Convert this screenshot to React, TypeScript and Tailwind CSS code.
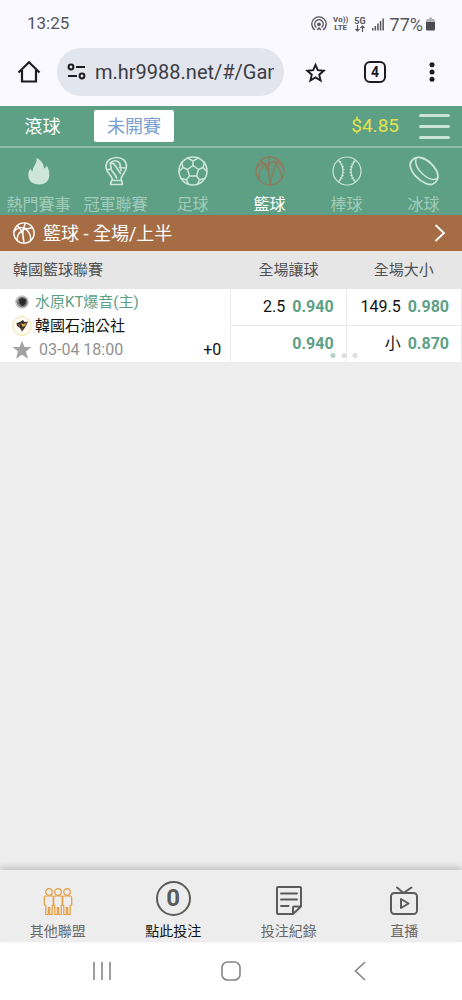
import { useState } from "react";
import type { ReactNode } from "react";

function PhoneStatus() {
  return (
    <div className="flex h-12 items-center justify-between pr-[27px] pl-[27px] text-[17px] text-[#55555c]">
      <time>13:25</time>
      <div className="flex items-center gap-1.5">
        <svg width="16" height="16" viewBox="0 0 16 16" fill="none" stroke="currentColor" strokeWidth="1.4" strokeLinecap="round" aria-hidden="true">
          <path d="M3.4 13.6A7.2 7.2 0 1 1 12.6 13.6" />
          <path d="M5 10.9A4.2 4.2 0 1 1 11 10.9" />
          <circle cx="8" cy="8.3" r="1.2" fill="currentColor" />
          <path d="M6.500 13.600L8 12L9.500 13.600" />
        </svg>
        <span className="flex flex-col items-center text-[8px] leading-[8px] font-bold">
          <span>Vo))</span>
          <span>LTE</span>
        </span>
        <span className="flex flex-col items-center text-[9px] leading-[8px] font-bold">
          <span>5G</span>
          <svg width="10" height="7" viewBox="0 0 10 7" fill="none" stroke="currentColor" strokeWidth="1.2" aria-hidden="true">
            <path d="M2.500 0V6M0.500 4L2.500 6L4.500 4M7.500 7V1M5.500 3L7.500 1L9.500 3" />
          </svg>
        </span>
        <svg width="12" height="13" viewBox="0 0 12 13" fill="currentColor" aria-hidden="true">
          <path d="M0 10h1.500v2.500H0zM2.600 8h1.500v4.500H2.600zM5.200 5.500h1.500v7H5.200zM7.800 3h1.500v9.500H7.800zM10.400 0.500h1.500v12h-1.500z" />
        </svg>
        <span className="flex items-center gap-[3px] text-[18px]">
          77%
          <svg width="9" height="14" viewBox="0 0 9 14" aria-hidden="true">
            <path d="M3 0.500H6V2H7.500Q9 2 9 3.500V5H0V3.500Q0 2 1.500 2H3Z" fill="#b4b4b8" />
            <path d="M0 5H9V12.500Q9 13.500 8 13.500H1Q0 13.500 0 12.500Z" fill="#4c4c52" />
          </svg>
        </span>
      </div>
    </div>
  );
}

function BrowserBar() {
  return (
    <div className="flex h-[58px] items-start pr-0.5 text-[#1d1d21]">
      <button type="button" aria-label="首頁" className="flex h-12 w-[57px] items-center justify-center">
        <svg width="24" height="24" viewBox="0 0 24 24" fill="none" stroke="currentColor" strokeWidth="2.2" strokeLinejoin="miter">
          <path d="M1.500 12.500L12 2.200L22.500 12.500M5 10V21.500H19V10" />
        </svg>
      </button>
      <div className="flex h-12 flex-1 items-center gap-2 rounded-full bg-[#e2e5ee] pr-2.5 pl-2.5">
        <svg width="20" height="18" viewBox="0 0 20 18" fill="none" stroke="currentColor" strokeWidth="2" aria-hidden="true">
          <circle cx="4" cy="4" r="2.400" />
          <path d="M9 4H18M1 13H10" />
          <circle cx="15" cy="13" r="2.400" />
        </svg>
        <input
          aria-label="網址"
          readOnly
          value="m.hr9988.net/#/Game"
          className="w-0 flex-1 bg-transparent text-[20px] text-[#3c3d44] outline-none"
        />
      </div>
      <button type="button" aria-label="加入書籤" className="flex h-12 w-[62px] items-center justify-center">
        <svg width="21" height="21" viewBox="0 0 21 21" fill="none" stroke="currentColor" strokeWidth="1.900" strokeLinejoin="miter">
          <path d="M10.500 2.800L12.800 8.200L18.800 8.700L14.200 12.700L15.600 18.500L10.500 15.400L5.400 18.500L6.800 12.700L2.200 8.700L8.200 8.200Z" />
        </svg>
      </button>
      <button type="button" aria-label="分頁" className="flex h-12 w-[58px] items-center justify-center">
        <span className="flex h-[22px] w-[22px] items-center justify-center rounded-md border-2 border-current text-sm font-bold">4</span>
      </button>
      <button type="button" aria-label="更多" className="flex h-12 w-[56px] items-center justify-center">
        <svg width="6" height="20" viewBox="0 0 6 20" fill="currentColor">
          <circle cx="3" cy="2.700" r="2.500" />
          <circle cx="3" cy="10" r="2.500" />
          <circle cx="3" cy="17.300" r="2.500" />
        </svg>
      </button>
    </div>
  );
}

function SportSvg({ children }: { children: ReactNode }) {
  return (
    <svg width="30" height="30" viewBox="0 0 30 30" fill="none" stroke="currentColor" strokeWidth="1.500" strokeLinecap="round" strokeLinejoin="round" aria-hidden="true">
      {children}
    </svg>
  );
}

function BasketballLines() {
  return (
    <g strokeWidth="1.300">
      <circle cx="15" cy="15" r="14" />
      <path d="M14.500 1.200C13 10 13.500 20 15 29M1.300 13C6 5.500 12.500 6 14 12.500M14 9C17 3.500 23 4 28.500 12M4 23.500C3 17 5.500 12.500 9.500 9M26.500 23C27 16 24 10.500 19 6.500M6 4.500C12 10 15 19 15.500 29M24 4C19 11 16.500 19 15.500 29" />
    </g>
  );
}

function BasketballBadge() {
  return (
    <svg width="22" height="22" viewBox="0 0 30 30" fill="none" stroke="currentColor" strokeWidth="1.900" aria-hidden="true">
      <circle cx="15" cy="15" r="13.800" />
      <path d="M17 1.500C13 9 12.500 19 15 28.500M1.500 13C6 7.500 11.500 7 16 8.500C20 9.700 24 9 27 7M5.500 4.500C12 10 14.500 19 15 28.500M5.500 25C5.500 18.500 9 12 18 8.500M24 25.500C25 19 22 13 16 8.500" />
    </svg>
  );
}

const sports: { label: string; icon: ReactNode }[] = [
  {
    label: "熱門賽事",
    icon: (
      <path
        d="M12.500 2C17.500 4 20 8.500 20 12.500C21.500 12 22.500 10.800 22.300 9.300C24.500 12 25.700 16 25.300 20C24.800 25 21 28.500 15 28.500C8.500 28.500 4.500 24.500 4.300 19.500C4.200 16.500 5.200 14 6.500 12.500C6.800 14 7.500 15 8.700 15.300C8.500 10 13.500 7.500 12.500 2Z"
        fill="currentColor"
        stroke="none"
      />
    ),
  },
  {
    label: "冠軍聯賽",
    icon: (
      <path
        d="M9.500 28.500L10.500 24.500H20.500L21.500 28.500ZM11.500 24C11.500 19.500 5 17 5 10.500C5 5 9.500 1.500 15.500 1.500S25.500 5 25.500 10.500C25.500 16.500 20 18.500 20 24M6 13.500C9 14 11.500 12.500 9.500 10C8.500 7.500 12 6.500 13.500 8.500L19.500 17.500M10 13C11.500 16.500 15.500 19 15.500 22M9 7C12 4 16.500 4 18.500 7C20 10 19 12 20 14.500M18.500 11.500L25 12"
        strokeWidth="1.700"
      />
    ),
  },
  {
    label: "足球",
    icon: (
      <>
        <circle cx="15" cy="15" r="14" />
        <path d="M15 9.500L20.500 13.500L18.500 20H11.500L9.500 13.500ZM15 9.500V5L9.500 1.800M15 5L20.500 1.800M20.500 13.500L25 11.500L26.500 6.200M25 11.500L29 15.500M18.500 20L21.500 23.800L27 22.500M21.500 23.800L19.500 28.300M11.500 20L8.500 23.800L3 22.500M8.500 23.800L10.500 28.300M9.500 13.500L5 11.500L3.500 6.200M5 11.500L1 15.500" />
      </>
    ),
  },
  { label: "籃球", icon: <BasketballLines /> },
  {
    label: "棒球",
    icon: (
      <>
        <circle cx="15" cy="15" r="14" strokeWidth="1.200" />
        <path d="M6.500 4.200C12.500 10 12.500 20 6.500 25.800M23.500 4.200C17.500 10 17.500 20 23.500 25.800" strokeWidth="1.200" />
        <path d="M7.500 5.500C12.700 11 12.700 19 7.500 24.500M22.500 5.500C17.300 11 17.300 19 22.500 24.500" strokeWidth="2.500" strokeDasharray="0.900 2" strokeLinecap="butt" />
      </>
    ),
  },
  {
    label: "冰球",
    icon: (
      <>
        <path d="M4 3.500C8 -0.500 16 1.500 22 7.500C27.500 13 30.500 19 28 24C26 28.500 21.500 29.500 17 27.500C9 24 2 16.500 1.200 9.500C1 7 2 5 4 3.500Z" strokeWidth="1.800" />
        <path d="M7 2.300C5.500 7.500 9 14 14.500 18.800C19.500 23 25 24.500 28.500 22" />
      </>
    ),
  },
];

function Header() {
  const [active, setActive] = useState(3);
  return (
    <header className="bg-[#5da086] text-white">
      <div className="flex h-10 items-center pr-3 text-[18px]">
        <button type="button" className="w-[85px] text-center">滾球</button>
        <button type="button" className="ml-[9px] h-8 w-20 rounded-xs bg-white text-[#7c9fd2]">未開賽</button>
        <span className="ml-auto text-[19px] text-[#e3e24c]">$4.85</span>
        <button type="button" aria-label="選單" className="ml-5 flex w-[31px] flex-col gap-2">
          <span className="h-[3px] rounded-full bg-[#cbe3d8]" />
          <span className="h-[3px] rounded-full bg-[#cbe3d8]" />
          <span className="h-[3px] rounded-full bg-[#cbe3d8]" />
        </button>
      </div>
      <nav aria-label="運動" className="grid h-[69px] grid-cols-6 border-t-2 border-[#8dbca9] pt-2">
        {sports.map((sport, i) => (
          <button
            key={sport.label}
            type="button"
            onClick={() => setActive(i)}
            className="flex flex-col items-center gap-[9px]"
          >
            <span className={i === active ? "text-[#94785a]" : "text-[#cde5da]"}>
              <SportSvg>{sport.icon}</SportSvg>
            </span>
            <span className={i === active ? "text-base leading-5 text-white" : "text-base leading-5 text-[#a3cbb9]"}>
              {sport.label}
            </span>
          </button>
        ))}
      </nav>
    </header>
  );
}

function Odds({ line, price }: { line?: string; price: string }) {
  return (
    <button type="button" className="flex h-9 w-full items-center justify-end gap-[7px] pr-3 text-base">
      {line && <span className="text-[#111]">{line}</span>}
      <span className="font-bold text-[#5da086]">{price}</span>
    </button>
  );
}

function HomeLogo() {
  return (
    <svg width="16" height="16" viewBox="0 0 16 16" aria-hidden="true">
      <circle cx="8" cy="8" r="6.800" fill="#c9c9c9" />
      <circle cx="8.300" cy="8" r="5.300" fill="#777" />
      <path d="M5 5.500L8 4L12 5.500L11.500 10L8.500 12L5.500 9.500Z" fill="#292929" />
      <path d="M1.500 6L4.500 7L2 9" fill="#a1a1a1" />
    </svg>
  );
}

function AwayLogo() {
  return (
    <svg width="20" height="20" viewBox="0 0 20 20" aria-hidden="true">
      <circle cx="10" cy="10" r="9.300" fill="#fffdf4" stroke="#edd98e" strokeWidth="0.900" />
      <path d="M4.500 7L8 6L11 4L12.500 6L16 5.500L14.500 9L12 13L10 15.500L8 12L5 10Z" fill="#34302d" />
      <path d="M9 7.500L12 8L15 6.500L13 10L10.500 11Z" fill="#dba736" />
      <path d="M5.500 8L8 8.500L7.500 11ZM9.500 13L11 12L10 15Z" fill="#b15f42" />
    </svg>
  );
}

function MatchTable() {
  return (
    <div className="relative border-t border-[#f1e4dc]">
      <table className="w-full table-fixed border-collapse">
        <thead>
          <tr className="h-[37px] bg-[#e6e6e6] text-[15px] text-[#505050]">
            <th scope="col" className="w-1/2 pl-[13px] text-left font-normal">韓國籃球聯賽</th>
            <th scope="col" className="w-1/4 font-normal">全場讓球</th>
            <th scope="col" className="w-1/4 font-normal">全場大小</th>
          </tr>
        </thead>
        <tbody className="bg-white">
          <tr>
            <td rowSpan={2} className="border-r border-[#ebebeb] pr-[9px] pl-3">
              <div className="flex h-6 items-center gap-[3px] text-[15px] text-[#5da086]">
                <span className="flex w-5 justify-center"><HomeLogo /></span>
                水原KT爆音(主)
              </div>
              <div className="flex h-6 items-center gap-[3px] text-[15px] text-[#111]">
                <AwayLogo />
                韓國石油公社
              </div>
              <div className="flex h-[23px] items-center text-base text-[#919191]">
                <button type="button" aria-label="收藏">
                  <svg width="20" height="20" viewBox="0 0 20 20" fill="#a2a2a2">
                    <path d="M10 0.800L12.500 7H19.500L14 11.500L16 18.800L10 14.700L4 18.800L6 11.500L0.500 7H7.500Z" />
                  </svg>
                </button>
                <time className="ml-[7px]">03-04 18:00</time>
                <span className="ml-auto text-[#111]">+0</span>
              </div>
            </td>
            <td className="border-r border-b border-[#ebebeb]"><Odds line="2.5" price="0.940" /></td>
            <td className="border-r border-b border-[#ebebeb]"><Odds line="149.5" price="0.980" /></td>
          </tr>
          <tr>
            <td className="border-r border-[#ebebeb]"><Odds price="0.940" /></td>
            <td className="border-r border-[#ebebeb]"><Odds line="小" price="0.870" /></td>
          </tr>
        </tbody>
      </table>
      <div className="absolute bottom-1 left-3/4 flex -translate-x-1/2 gap-1.5 pr-1.5" aria-hidden="true">
        <span className="h-[5px] w-[5px] rounded-full bg-[#b5d3c7]" />
        <span className="h-[5px] w-[5px] rounded-full bg-[#dedede]" />
        <span className="h-[5px] w-[5px] rounded-full bg-[#dedede]" />
      </div>
    </div>
  );
}

function Person({ x }: { x: number }) {
  return (
    <g transform={`translate(${x} 0)`}>
      <circle cx="5" cy="4" r="3.300" />
      <path d="M2 8H8Q9.700 8 9.700 10V16.500L8.200 18V26.500H5.700V19.500H4.300V26.500H1.800V18L0.300 16.500V10Q0.300 8 2 8Z" />
    </g>
  );
}

function BottomNav() {
  const item = "flex flex-col items-center justify-end gap-[5px] pb-px text-[#686868]";
  return (
    <nav aria-label="主選單" className="relative grid h-[72px] grid-cols-4 bg-[#ededed] text-sm shadow-[0_-3px_6px_rgba(0,0,0,0.18)]">
      <button type="button" className={item}>
        <svg width="30" height="28" viewBox="0 0 30 28" fill="none" stroke="#e69d3d" strokeWidth="1.200" strokeLinejoin="round" aria-hidden="true">
          <Person x={1} />
          <Person x={10} />
          <Person x={19} />
        </svg>
        其他聯盟
      </button>
      <button type="button" className={item}>
        <span className="flex h-[35px] w-[35px] items-center justify-center rounded-full border-2 border-[#5b5b5b] text-[24px] font-bold text-[#5b5b5b]">0</span>
        <span className="text-[#111]">點此投注</span>
      </button>
      <button type="button" className={item}>
        <svg width="28" height="30" viewBox="0 0 28 30" fill="none" stroke="#5b5b5b" strokeWidth="2" strokeLinejoin="round" strokeLinecap="round" aria-hidden="true">
          <path d="M17.500 28H3Q2 28 2 27V2Q2 1 3 1H25Q26 1 26 2V20.500L18 28V21.500Q18 20.500 19 20.500H26M6 7.500H22M6 13.500H22M6 20H13.500" />
        </svg>
        投注紀錄
      </button>
      <button type="button" className={item}>
        <svg width="30" height="30" viewBox="0 0 30 30" fill="none" stroke="#5b5b5b" strokeWidth="2" strokeLinejoin="round" strokeLinecap="round" aria-hidden="true">
          <rect x="2" y="7" width="26" height="21" rx="3.500" />
          <path d="M8 1.500L14.500 7L22.500 1.500M12 13V22L19.500 17.500Z" />
        </svg>
        直播
      </button>
    </nav>
  );
}

function SystemNav() {
  return (
    <div className="flex h-[58px] items-center justify-between bg-white px-[86px] text-[#858585]">
      <button type="button" aria-label="最近使用" className="flex w-8 justify-center">
        <svg width="18" height="20" viewBox="0 0 18 20" stroke="currentColor" strokeWidth="1.600">
          <path d="M1 1V19M9 1V19M17 1V19" />
        </svg>
      </button>
      <button type="button" aria-label="主畫面">
        <svg width="20" height="20" viewBox="0 0 20 20" fill="none" stroke="currentColor" strokeWidth="1.600">
          <rect x="1" y="1" width="18" height="18" rx="5.500" />
        </svg>
      </button>
      <button type="button" aria-label="返回" className="flex w-8 justify-center">
        <svg width="12" height="20" viewBox="0 0 12 20" fill="none" stroke="currentColor" strokeWidth="1.600">
          <path d="M11 1L1.500 10L11 19" />
        </svg>
      </button>
    </div>
  );
}

export default function App() {
  return (
    <div className="flex min-h-screen flex-col bg-[#ededed] font-['Roboto','Noto_Sans_CJK_TC',sans-serif]">
      <div className="bg-[#faf9ff]">
        <PhoneStatus />
        <BrowserBar />
      </div>
      <Header />
      <main className="flex-1">
        <button type="button" className="flex h-9 w-full items-center gap-2 bg-[#a66c44] pr-4 pl-[13px] text-[18px] text-white">
          <BasketballBadge />
          <span>籃球 - 全場/上半</span>
          <svg className="ml-auto" width="12" height="20" viewBox="0 0 12 20" fill="none" stroke="currentColor" strokeWidth="1.800" aria-hidden="true">
            <path d="M1.500 2L10 10L1.500 18" />
          </svg>
        </button>
        <MatchTable />
      </main>
      <BottomNav />
      <SystemNav />
    </div>
  );
}
